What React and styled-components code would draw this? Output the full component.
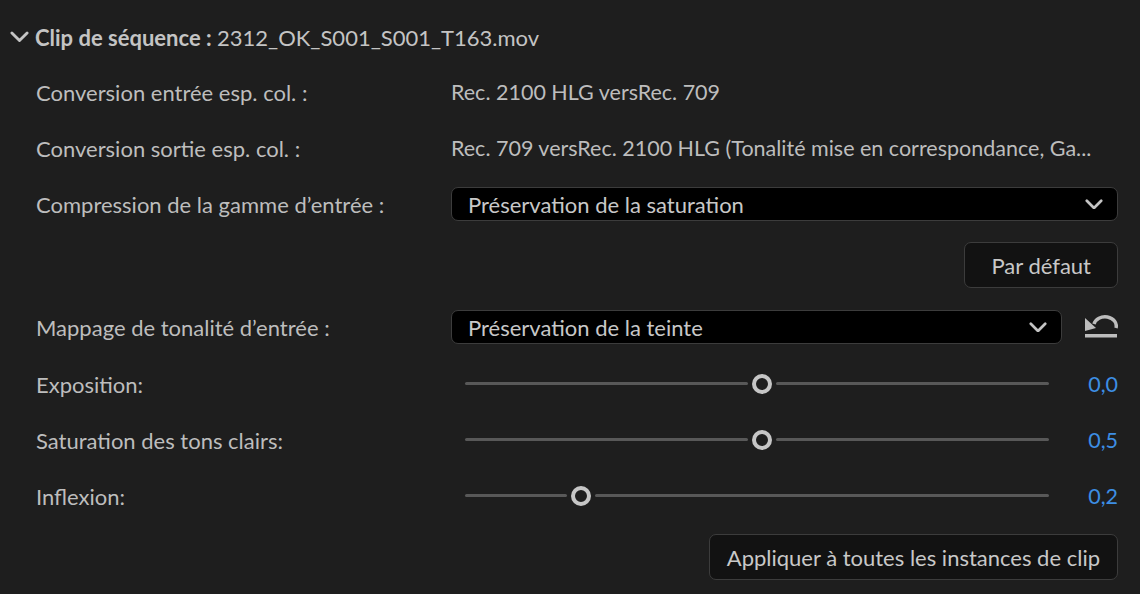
import React from "react";
import styled, { createGlobalStyle } from "styled-components";

const Global = createGlobalStyle`
  html, body { margin: 0; padding: 0; background: #1e1e1e; }
  body { font-family: Lato, "Liberation Sans", sans-serif; color: #bcbcbc; }
`;

const Panel = styled.div`
  width: 1140px;
  height: 594px;
  box-sizing: border-box;
  padding: 20px 22px 0 10px;
  background: #1e1e1e;
  overflow: hidden;
`;

const Header = styled.div`
  display: flex;
  align-items: center;
  gap: 6px;
  height: 34px;
  font-size: 22px;
  color: #c4c4c4;
`;

const HeaderBold = styled.span`
  font-weight: 700;
`;

const Body = styled.div`
  display: grid;
  grid-template-columns: 415px 1fr;
  padding-left: 26px;
  margin-top: 10px;
  align-items: center;
`;

const Label = styled.div`
  font-size: 22px;
  color: #bdbdbd;
  height: ${(p) => p.h || 56}px;
  display: flex;
  align-items: center;
  white-space: nowrap;
`;

const Value = styled.div`
  font-size: 21.5px;
  color: #bdbdbd;
  height: ${(p) => p.h || 56}px;
  display: flex;
  align-items: center;
  white-space: nowrap;
  gap: 22px;
  min-width: 0;
`;

const Select = styled.div`
  flex: 1;
  height: 34px;
  box-sizing: border-box;
  background: #000;
  border: 1.5px solid #3c3c3c;
  border-radius: 7px;
  display: flex;
  align-items: center;
  justify-content: space-between;
  padding: 0 14px 0 16px;
  font-size: 22px;
  color: #c8c8c8;
`;

const ButtonRow = styled.div`
  grid-column: 1 / span 2;
  display: flex;
  justify-content: flex-end;
  height: ${(p) => p.h}px;
  align-items: center;
`;

const Button = styled.div`
  height: 46px;
  box-sizing: border-box;
  border: 1.5px solid #3c3c3c;
  border-radius: 7px;
  background: #121212;
  display: flex;
  align-items: center;
  justify-content: center;
  padding: 0 ${(p) => p.px || 16}px;
  font-size: 22px;
  color: #c8c8c8;
`;

const SliderWrap = styled.div`
  flex: 1;
  display: flex;
  align-items: center;
  padding-left: 14px;
`;

const Track = styled.div`
  position: relative;
  width: 584px;
  height: 20px;
`;

const TrackLine = styled.div`
  position: absolute;
  top: 8px;
  height: 3px;
  border-radius: 2px;
  background: #585858;
`;

const Thumb = styled.div`
  position: absolute;
  top: 0;
  width: 20px;
  height: 20px;
  box-sizing: border-box;
  border-radius: 50%;
  border: 4px solid #c6c6c6;
  background: #1e1e1e;
`;

const Num = styled.div`
  margin-left: auto;
  color: #3d8ee4;
  font-size: 21.5px;
`;

const Chevron = ({ size = 20 }) => (
  <svg width={size} height={size * 0.6} viewBox="0 0 20 12" fill="none">
    <path d="M2 2 L10 10 L18 2" stroke="#c4c4c4" strokeWidth="3" strokeLinecap="round" strokeLinejoin="round" />
  </svg>
);

const ResetIcon = () => (
  <svg width="34" height="24" viewBox="0 0 34 24">
    <path d="M10 9 A11 9 0 0 1 32 13" fill="none" stroke="#bdbdbd" strokeWidth="3.5" />
    <path d="M1 3 L12 13 L1 16 Z" fill="#bdbdbd" />
    <rect x="1" y="19" width="32" height="3.5" fill="#bdbdbd" />
  </svg>
);

const Slider = ({ pos, value }) => (
  <SliderWrap>
    <Track>
      <TrackLine style={{ left: 0, width: Math.max(0, pos - 14) }} />
      <Thumb style={{ left: pos - 10 }} />
      <TrackLine style={{ left: pos + 14, right: 0 }} />
    </Track>
    <Num>{value}</Num>
  </SliderWrap>
);

export default function App() {
  return (
    <>
      <Global />
      <Panel>
        <Header>
          <Chevron size={19} />
          <span>
            <HeaderBold>Clip de séquence : </HeaderBold>2312_OK_S001_S001_T163.mov
          </span>
        </Header>
        <Body>
          <Label>Conversion entrée esp. col. :</Label>
          <Value>Rec. 2100 HLG versRec. 709</Value>

          <Label>Conversion sortie esp. col. :</Label>
          <Value>Rec. 709 versRec. 2100 HLG (Tonalité mise en correspondance, Ga...</Value>

          <Label>Compression de la gamme d’entrée :</Label>
          <Value>
            <Select>
              Préservation de la saturation
              <Chevron size={18} />
            </Select>
          </Value>

          <ButtonRow h={66}>
            <Button px={26}>Par défaut</Button>
          </ButtonRow>

          <Label h={58}>Mappage de tonalité d’entrée :</Label>
          <Value h={58}>
            <Select>
              Préservation de la teinte
              <Chevron size={18} />
            </Select>
            <ResetIcon />
          </Value>

          <Label>Exposition:</Label>
          <Value>
            <Slider pos={297} value="0,0" />
          </Value>

          <Label>Saturation des tons clairs:</Label>
          <Value>
            <Slider pos={297} value="0,5" />
          </Value>

          <Label>Inflexion:</Label>
          <Value>
            <Slider pos={116} value="0,2" />
          </Value>

          <ButtonRow h={66}>
            <Button px={17}>Appliquer à toutes les instances de clip</Button>
          </ButtonRow>
        </Body>
      </Panel>
    </>
  );
}
